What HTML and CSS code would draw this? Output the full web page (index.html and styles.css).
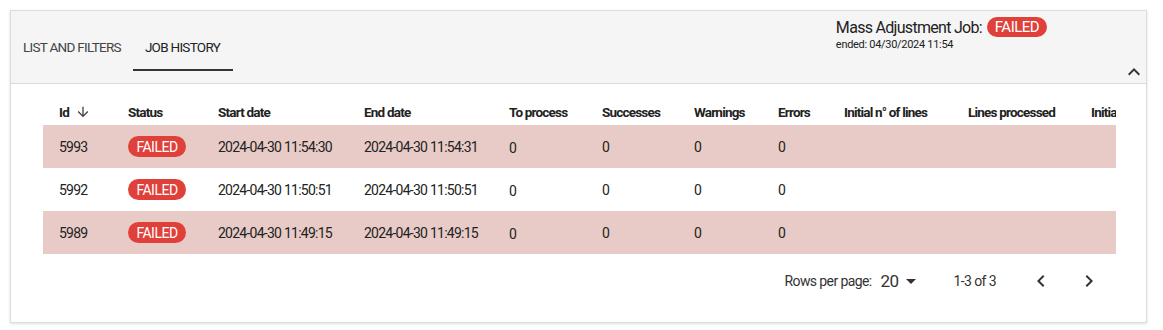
FILE: index.html
```html
<!DOCTYPE html>
<html lang="en">
<head>
    <meta charset="UTF-8">
    <title>Job History</title>
    <link rel="stylesheet" href="styles.css">
</head>
<body>
    <div class="card">
        <div class="card-header">
            <div class="tabs">
                <div class="tab">List and filters</div>
                <div class="tab active">Job history</div>
            </div>
            <div class="job-status">
                <div class="job-title">Mass Adjustment Job: <span class="badge badge-lg">FAILED</span></div>
                <div class="job-ended">ended: 04/30/2024 11:54</div>
            </div>
            <button class="collapse-btn" aria-label="collapse">
                <svg width="24" height="24" viewBox="0 0 24 24"><path d="M7.41 15.41 12 10.83l4.59 4.58L18 14l-6-6-6 6z" fill="#333"/></svg>
            </button>
        </div>

        <div class="card-body">
            <div class="table-wrap">
                <table class="jobs">
                    <colgroup>
                        <col class="c-id"><col class="c-status"><col class="c-date"><col class="c-date2">
                        <col class="c-num"><col class="c-num2"><col class="c-num3"><col class="c-num4">
                        <col class="c-lines"><col class="c-lines2"><col class="c-lines">
                    </colgroup>
                    <thead>
                        <tr>
                            <th>Id <svg class="sort" width="16" height="16" viewBox="0 0 24 24"><path d="M20 12l-1.41-1.41L13 16.17V4h-2v12.17l-5.58-5.59L4 12l8 8 8-8z" fill="#444"/></svg></th>
                            <th>Status</th>
                            <th>Start date</th>
                            <th>End date</th>
                            <th>To process</th>
                            <th>Successes</th>
                            <th>Warnings</th>
                            <th>Errors</th>
                            <th>Initial n° of lines</th>
                            <th>Lines processed</th>
                            <th>Initial lines</th>
                        </tr>
                    </thead>
                    <tbody>
                        <tr class="row-failed">
                            <td>5993</td>
                            <td><span class="badge">FAILED</span></td>
                            <td>2024-04-30 11:54:30</td>
                            <td>2024-04-30 11:54:31</td>
                            <td class="low">0</td>
                            <td>0</td>
                            <td>0</td>
                            <td>0</td>
                            <td></td><td></td><td></td>
                        </tr>
                        <tr>
                            <td>5992</td>
                            <td><span class="badge">FAILED</span></td>
                            <td>2024-04-30 11:50:51</td>
                            <td>2024-04-30 11:50:51</td>
                            <td class="low">0</td>
                            <td>0</td>
                            <td>0</td>
                            <td>0</td>
                            <td></td><td></td><td></td>
                        </tr>
                        <tr class="row-failed">
                            <td>5989</td>
                            <td><span class="badge">FAILED</span></td>
                            <td>2024-04-30 11:49:15</td>
                            <td>2024-04-30 11:49:15</td>
                            <td class="low">0</td>
                            <td>0</td>
                            <td>0</td>
                            <td>0</td>
                            <td></td><td></td><td></td>
                        </tr>
                    </tbody>
                </table>
            </div>

            <div class="pager">
                <span class="pager-label">Rows per page:</span>
                <span class="pager-select">20
                    <svg width="24" height="24" viewBox="0 0 24 24"><path d="M7 10l5 5 5-5z" fill="#333"/></svg>
                </span>
                <span class="pager-range">1-3 of 3</span>
                <button class="pager-btn" aria-label="previous">
                    <svg width="24" height="24" viewBox="0 0 24 24"><path d="M15.41 7.41 14 6l-6 6 6 6 1.41-1.41L10.83 12z" fill="#333"/></svg>
                </button>
                <button class="pager-btn" aria-label="next">
                    <svg width="24" height="24" viewBox="0 0 24 24"><path d="M10 6 8.59 7.41 13.17 12l-4.58 4.59L10 18l6-6z" fill="#333"/></svg>
                </button>
            </div>
        </div>
    </div>
</body>
</html>
```

FILE: styles.css
```css
body {
    margin: 0;
    padding: 10px;
    background: #fff;
    font-family: Roboto, "Liberation Sans", sans-serif;
    color: #333;
}

.card {
    width: 1137px;
    height: 313px;
    box-sizing: border-box;
    border: 1px solid #dcdcdc;
    box-shadow: 0 1px 3px rgba(0, 0, 0, 0.12);
    background: #fff;
}

/* header with tabs */
.card-header {
    display: flex;
    height: 73px;
    box-sizing: border-box;
    background: #f5f5f5;
    border-bottom: 1px solid #d9d9d9;
}

.tabs {
    display: flex;
    padding-top: 12px;
}

.tab {
    height: 48px;
    padding: 0 12px;
    display: flex;
    align-items: center;
    font-size: 13.5px;
    text-transform: uppercase;
    letter-spacing: -0.72px;
    color: #444;
    box-sizing: border-box;
    white-space: nowrap;
}

.tab.active {
    color: #222;
    border-bottom: 2px solid #333;
    padding-top: 2px;
    width: 100px;
}

.job-status {
    margin-left: auto;
    margin-right: 75px;
    padding-top: 6px;
    white-space: nowrap;
}

.job-title {
    font-size: 16px;
    letter-spacing: -0.7px;
    color: #222;
    display: flex;
    align-items: center;
    gap: 5px;
}

.job-ended {
    font-size: 11px;
    letter-spacing: -0.3px;
    color: #222;
    margin-top: 1px;
}

.badge {
    display: inline-flex;
    align-items: center;
    justify-content: center;
    width: 58px;
    height: 21px;
    border-radius: 11px;
    background: #e0403a;
    color: #fff;
    font-size: 14px;
    letter-spacing: -0.5px;
}

.badge-lg {
    width: 60px;
    height: 20px;
    font-size: 15px;
}

.collapse-btn {
    align-self: flex-end;
    border: 0;
    background: none;
    padding: 0;
    width: 24px;
    height: 24px;
    margin-bottom: -1px;
}

/* table */
.card-body {
    padding: 14px 30px 0 32px;
}

.table-wrap {
    overflow: hidden;
}

.jobs {
    border-collapse: collapse;
    table-layout: fixed;
    width: 1156px;
    font-size: 14px;
    letter-spacing: -0.75px;
}

.c-id { width: 69px; }
.c-status { width: 90px; }
.c-date { width: 146px; }
.c-date2 { width: 145px; }
.c-num { width: 93px; }
.c-num2 { width: 92px; }
.c-num3 { width: 84px; }
.c-num4 { width: 66px; }
.c-lines { width: 124px; }
.c-lines2 { width: 123px; }

.jobs th {
    height: 27px;
    padding: 0 0 0 16px;
    text-align: left;
    font-weight: 700;
    font-size: 13.5px;
    letter-spacing: -0.8px;
    color: #222;
    white-space: nowrap;
    vertical-align: middle;
}

.sort {
    vertical-align: -3px;
    margin-left: 3px;
}

.jobs td {
    height: 43px;
    padding: 0 0 0 16px;
    white-space: nowrap;
    vertical-align: middle;
    color: #222;
}

.jobs td.low {
    height: 40px;
    padding-top: 3px;
}

.row-failed {
    background: #e8cbc7;
}

/* pagination */
.pager {
    display: flex;
    align-items: center;
    height: 54px;
    padding-right: 3px;
    justify-content: flex-end;
    font-size: 14px;
    letter-spacing: -0.6px;
}

.pager-select {
    display: flex;
    align-items: center;
    font-size: 17px;
    margin-left: 9px;
}

.pager-range {
    margin-left: 31px;
    margin-right: 21px;
}

.pager-btn {
    border: 0;
    background: none;
    padding: 12px;
    width: 48px;
    height: 48px;
}
```
